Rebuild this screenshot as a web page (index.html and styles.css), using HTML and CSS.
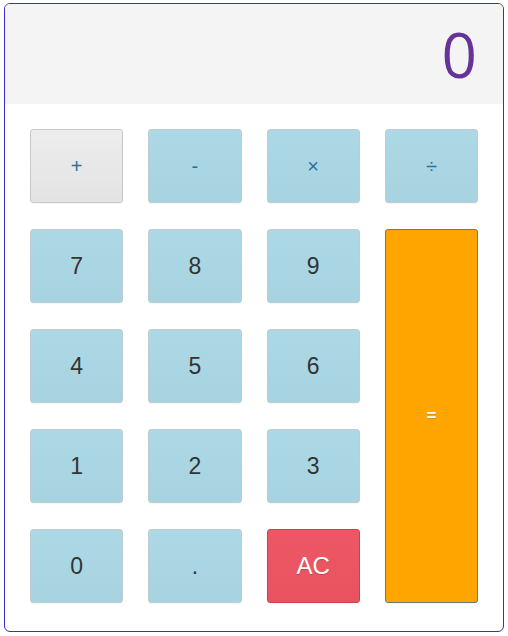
FILE: index.html
```html
<!DOCTYPE html>
<html>
<head>
<meta charset="utf-8">
<link rel="stylesheet" href="styles.css">
</head>
<body>
<div class="calc">
  <div class="display">0</div>
  <div class="keys">
    <button class="key op active">+</button>
    <button class="key op">-</button>
    <button class="key op">×</button>
    <button class="key op">÷</button>
    <button class="key">7</button>
    <button class="key">8</button>
    <button class="key">9</button>
    <button class="key equals">=</button>
    <button class="key">4</button>
    <button class="key">5</button>
    <button class="key">6</button>
    <button class="key">1</button>
    <button class="key">2</button>
    <button class="key">3</button>
    <button class="key">0</button>
    <button class="key">.</button>
    <button class="key clear">AC</button>
  </div>
</div>
</body>
</html>
```
FILE: styles.css
```css
html, body {
  margin: 0;
  padding: 0;
  background: #ffffff;
}
.calc {
  box-sizing: border-box;
  margin: 3px 4px 0 4px;
  width: 500px;
  height: 629px;
  border: 1px solid #3b2bc9;
  border-radius: 6px;
  overflow: hidden;
  background: #fff;
}
.display {
  height: 100px;
  background: #f4f4f4;
  color: #663399;
  font-family: "Open Sans", sans-serif;
  font-size: 62px;
  line-height: 100px;
  text-align: right;
  padding-right: 26px;
}
.keys {
  display: grid;
  grid-template-columns: repeat(4, 1fr);
  grid-auto-rows: 74px;
  column-gap: 25px;
  row-gap: 26px;
  padding: 25px 25px 0 25px;
}
.key {
  box-sizing: border-box;
  margin: 0;
  padding: 0;
  border: 1px solid #bfcdd3;
  border-radius: 3px;
  background: linear-gradient(#add8e6, #a7d3e1);
  color: #333;
  font-family: "Liberation Sans", Arial, sans-serif;
  font-size: 23px;
  box-shadow: 0 1px 1px rgba(0, 0, 0, 0.04);
}
.key.op {
  color: #2f6f9c;
  font-size: 20px;
}
.key.active {
  background: linear-gradient(#ededed, #e3e3e3);
  border-color: #c8c8c8;
}
.key.equals {
  grid-column: 4;
  grid-row: 2 / span 4;
  background: #ffa500;
  border-color: #6f7a6e;
  color: #fff;
  font-size: 17px;
  font-weight: bold;
  text-shadow: 0 1px 0 rgba(0, 0, 0, 0.15);
}
.key.clear {
  background: linear-gradient(#ee5866, #e9535f);
  border-color: #c9434f;
  color: #fff;
  font-size: 24px;
  text-shadow: 0 1px 1px rgba(0, 0, 0, 0.2);
}
```
